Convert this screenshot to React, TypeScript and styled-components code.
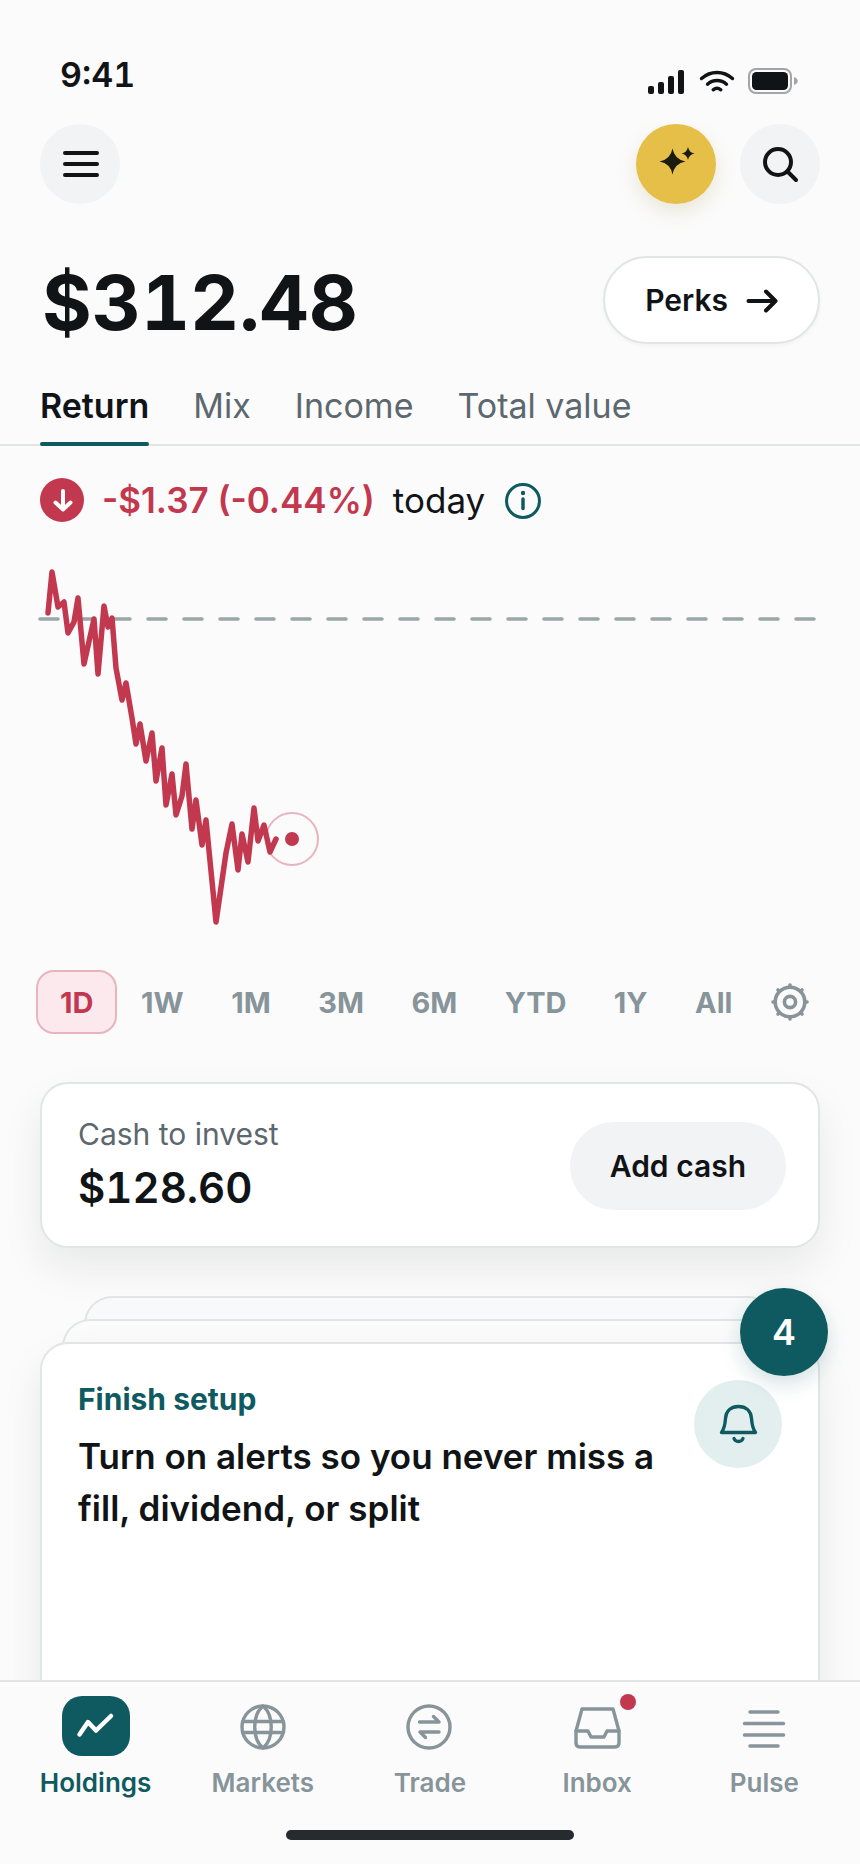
import React, { useState } from "react";
import styled, { createGlobalStyle, css } from "styled-components";

const color = {
  page: "#fbfbfb",
  ink: "#111416",
  muted: "#5c686e",
  faint: "#87949a",
  line: "#e0e5e5",
  fill: "#f1f3f5",
  teal: "#0f5a60",
  red: "#c2384f",
  gold: "#e6bf48",
};

const GlobalStyle = createGlobalStyle`
  *, *::before, *::after { box-sizing: border-box; }
  body {
    margin: 0;
    background: ${color.page};
    color: ${color.ink};
    font-family: Inter, "Liberation Sans", sans-serif;
    -webkit-font-smoothing: antialiased;
  }
  button {
    margin: 0;
    padding: 0;
    border: 0;
    background: none;
    color: inherit;
    font: inherit;
    cursor: pointer;
  }
  svg { display: block; flex: none; }
  h1, h2, p { margin: 0; }
`;

const Screen = styled.div`
  height: 100vh;
  display: flex;
  flex-direction: column;
`;

const StatusBar = styled.div`
  display: flex;
  justify-content: space-between;
  align-items: flex-end;
  padding: 50px 62px 24px 60px;
`;

const Clock = styled.time`
  font-size: 34px;
  line-height: 50px;
  font-weight: 600;
  font-variant-numeric: tabular-nums;
`;

const Content = styled.main`
  flex: 1;
  min-height: 0;
  overflow: hidden auto;
  scrollbar-width: none;
`;

const Row = styled.div`
  display: flex;
  align-items: center;
  justify-content: space-between;
  padding: 0 40px;
`;

const Actions = styled.div`
  display: flex;
  gap: 24px;
`;

const RoundButton = styled.button<{ $accent?: boolean }>`
  width: 80px;
  height: 80px;
  border-radius: 50%;
  display: grid;
  place-items: center;
  background: ${color.fill};
  ${(p) =>
    p.$accent &&
    css`
      background: ${color.gold};
      box-shadow: 0 8px 20px rgba(150, 120, 30, 0.16);
    `}
`;

const BalanceRow = styled(Row)`
  align-items: flex-start;
  margin-top: 52px;
  padding-left: 42px;
`;

const Balance = styled.h1`
  font-size: 76px;
  line-height: 92px;
  font-weight: 700;
  font-variant-numeric: tabular-nums;
`;

const PillButton = styled.button<{ $outlined?: boolean }>`
  display: flex;
  align-items: center;
  gap: 18px;
  height: 88px;
  padding: 0 40px;
  border-radius: 44px;
  background: ${color.fill};
  font-size: 30px;
  font-weight: 600;
  ${(p) =>
    p.$outlined &&
    css`
      background: #fff;
      border: 2px solid ${color.line};
      box-shadow: 0 2px 4px rgba(16, 24, 28, 0.04);
    `}
`;

const Tabs = styled.div`
  display: flex;
  gap: 44px;
  margin-top: 36px;
  padding: 0 40px;
  box-shadow: inset 0 -2px ${color.line};
`;

const Tab = styled.button<{ $active: boolean }>`
  position: relative;
  padding-bottom: 18px;
  font-size: 34px;
  line-height: 44px;
  font-weight: ${(p) => (p.$active ? 600 : 400)};
  color: ${(p) => (p.$active ? color.ink : color.muted)};
  &::after {
    content: "";
    position: absolute;
    left: 0;
    right: 0;
    bottom: 0;
    height: 4px;
    border-radius: 2px;
    background: ${(p) => (p.$active ? color.teal : "transparent")};
  }
`;

const ChangeRow = styled.div`
  display: flex;
  align-items: center;
  gap: 18px;
  margin-top: 32px;
  padding: 0 40px;
  font-size: 35px;
  line-height: 44px;
`;

const Loss = styled.span`
  color: ${color.red};
  font-weight: 600;
`;

const Chart = styled.svg`
  width: calc(100% - 76px);
  height: auto;
  margin: 28px 38px 0;
`;

const Ranges = styled.div`
  display: flex;
  justify-content: space-between;
  margin: 20px 36px 0;
`;

const RangeButton = styled.button<{ $active?: boolean }>`
  display: grid;
  place-items: center;
  min-width: 68px;
  height: 64px;
  padding: 0 22px;
  border: 2px solid transparent;
  border-radius: 18px;
  font-size: 29px;
  font-weight: 700;
  color: ${color.faint};
  ${(p) =>
    p.$active &&
    css`
      color: ${color.red};
      background: #fbe9ed;
      border-color: #e8b4c0;
    `}
`;

const SettingsButton = styled(RangeButton)`
  padding: 0;
`;

const surface = css`
  background: #fff;
  border: 2px solid ${color.line};
  border-radius: 28px;
  box-shadow: 0 20px 40px rgba(16, 24, 28, 0.08);
`;

const CashCard = styled.section`
  ${surface}
  display: flex;
  align-items: center;
  justify-content: space-between;
  margin: 48px 40px 0;
  padding: 26px 32px 24px 36px;
  min-height: 166px;
`;

const CashLabel = styled.p`
  font-size: 30px;
  line-height: 44px;
  color: ${color.muted};
`;

const CashValue = styled.p`
  font-size: 42px;
  line-height: 64px;
  font-weight: 600;
  font-variant-numeric: tabular-nums;
`;

const Stack = styled.section`
  position: relative;
  margin: 48px 40px 0;
`;

const StackLayer = styled.div<{ $depth: number }>`
  height: 51px;
  margin: 0 ${(p) => p.$depth * 22}px -28px;
  border: 2px solid ${color.line};
  border-bottom: 0;
  border-radius: 28px 28px 0 0;
  background: ${(p) => (p.$depth > 1 ? "#f7f9fa" : "#fbfbfb")};
`;

const SetupCard = styled.article`
  ${surface}
  display: flex;
  justify-content: space-between;
  min-height: 400px;
  padding: 36px;
`;

const SetupText = styled.div`
  max-width: 600px;
`;

const Eyebrow = styled.p`
  font-size: 30px;
  line-height: 38px;
  font-weight: 700;
  color: ${color.teal};
`;

const SetupTitle = styled.h2`
  margin-top: 12px;
  font-size: 35px;
  line-height: 52px;
  font-weight: 600;
`;

const BellDisc = styled.div`
  flex: none;
  display: grid;
  place-items: center;
  width: 88px;
  height: 88px;
  border-radius: 50%;
  background: #e3efef;
`;

const CountBadge = styled.span`
  position: absolute;
  top: -8px;
  right: -8px;
  display: grid;
  place-items: center;
  width: 88px;
  height: 88px;
  border-radius: 50%;
  background: ${color.teal};
  color: #fff;
  font-size: 36px;
  font-weight: 600;
  box-shadow: 0 8px 20px rgba(15, 90, 96, 0.18);
`;

const NavArea = styled.footer`
  border-top: 2px solid ${color.line};
  background: ${color.page};
`;

const Nav = styled.nav`
  display: grid;
  grid-template-columns: repeat(5, 1fr);
  padding: 14px 12px 0;
`;

const NavButton = styled.button<{ $active?: boolean }>`
  display: flex;
  flex-direction: column;
  align-items: center;
  gap: 10px;
  font-size: 26px;
  line-height: 34px;
  font-weight: 600;
  color: ${(p) => (p.$active ? color.teal : color.faint)};
`;

const NavIcon = styled.span<{ $active?: boolean }>`
  position: relative;
  display: grid;
  place-items: center;
  width: 68px;
  height: 60px;
  border-radius: 20px;
  ${(p) => p.$active && `background: ${color.teal}; color: #fff;`}
`;

const UnreadDot = styled.span`
  position: absolute;
  top: -2px;
  right: -5px;
  width: 16px;
  height: 16px;
  border-radius: 50%;
  background: ${color.red};
`;

const HomeIndicator = styled.div`
  width: 288px;
  height: 10px;
  margin: 30px auto 24px;
  border-radius: 5px;
  background: #262b2f;
`;

const stroke = {
  fill: "none",
  stroke: "currentColor",
  strokeLinecap: "round",
  strokeLinejoin: "round",
} as const;

const StatusIcons = () => (
  <svg width="150" height="32" viewBox="0 0 150 32" aria-hidden="true">
    <g fill={color.ink}>
      <rect x="0" y="18" width="6" height="8" rx="2" />
      <rect x="10" y="14" width="6" height="12" rx="2" />
      <rect x="20" y="8" width="6" height="18" rx="2" />
      <rect x="30" y="2" width="6" height="24" rx="2" />
      <rect x="104" y="4" width="36" height="18" rx="4.5" />
    </g>
    <g {...stroke} stroke={color.ink} strokeWidth="3.4">
      <path d="M53.5 10.5C62.500 2.500 75.500 2.500 84.500 10.500" />
      <path d="M59.500 16.200C65 11.200 73 11.200 78.500 16.200" />
      <path d="M65.200 21.800C67.500 20 70.500 20 72.800 21.800" />
    </g>
    <rect x="101" y="1" width="42" height="24" rx="7" fill="none" stroke="#a2a6a8" strokeWidth="2" />
    <path d="M146 9c5 1.500 5 6.500 0 8z" fill="#a2a6a8" />
  </svg>
);

const MenuIcon = () => (
  <svg width="40" height="40" viewBox="0 0 40 40" aria-hidden="true">
    <path {...stroke} strokeWidth="4" d="M5 9h32M5 20h32M5 31h32" />
  </svg>
);

const SparkleIcon = () => (
  <svg width="44" height="44" viewBox="0 0 44 44" fill="#1b1c0e" aria-hidden="true">
    <path d="M18.500 6.500Q20.500 17.500 31.500 19.500Q20.500 21.500 18.500 32.500Q16.500 21.500 5.500 19.500Q16.500 17.500 18.500 6.500Z" />
    <path d="M34 5Q35 10.500 40.500 11.500Q35 12.500 34 18Q33 12.500 27.500 11.500Q33 10.500 34 5Z" />
  </svg>
);

const SearchIcon = () => (
  <svg width="44" height="44" viewBox="0 0 44 44" aria-hidden="true">
    <circle {...stroke} strokeWidth="4" cx="20" cy="20" r="13" />
    <path {...stroke} strokeWidth="4" d="M29.500 29.500L38 38" />
  </svg>
);

const ArrowIcon = () => (
  <svg width="32" height="28" viewBox="0 0 32 28" aria-hidden="true">
    <path {...stroke} strokeWidth="4" d="M2.500 15h27M20 5.500L29.500 15L20 24.500" />
  </svg>
);

const DownIcon = () => (
  <svg width="44" height="44" viewBox="0 0 44 44" aria-hidden="true">
    <circle cx="22" cy="22" r="22" fill={color.red} />
    <path {...stroke} stroke="#fff" strokeWidth="4" d="M23 13v18M15.500 24.500L23 31.500L30.500 24.500" />
  </svg>
);

const InfoIcon = () => (
  <svg width="40" height="40" viewBox="0 0 40 40" aria-hidden="true">
    <circle {...stroke} stroke={color.teal} strokeWidth="3" cx="20" cy="21" r="16.500" />
    <path {...stroke} stroke={color.teal} strokeWidth="3.500" d="M20 19v9.500" />
    <circle cx="20" cy="13" r="2.200" fill={color.teal} />
  </svg>
);

const GearIcon = () => (
  <svg width="40" height="40" viewBox="0 0 40 40" aria-hidden="true">
    <g {...stroke} strokeWidth="3.600">
      <circle cx="20" cy="20" r="14.800" />
      <circle cx="20" cy="20" r="5.600" />
      {[0, 45, 90, 135, 180, 225, 270, 315].map((a) => (
        <path key={a} d="M20 4.500V3" transform={`rotate(${a} 20 20)`} />
      ))}
    </g>
  </svg>
);

const BellIcon = () => (
  <svg width="48" height="48" viewBox="0 0 48 48" aria-hidden="true">
    <g {...stroke} stroke={color.teal} strokeWidth="3.400">
      <path d="M7.500 32.500C10.500 28.500 11 25.500 11.500 18.500C12 10.500 17.500 6.500 24.500 6.500S37 10.500 37.500 18.500C38 25.500 38.500 28.500 41.500 32.500Z" />
      <path d="M20 38.500C21.500 42.500 27.500 42.500 29 38.500" />
    </g>
  </svg>
);

const HoldingsIcon = () => (
  <svg width="48" height="48" viewBox="0 0 48 48" aria-hidden="true">
    <path {...stroke} strokeWidth="4.500" d="M7.500 32.500L16 20L24 28.500L39 14" />
  </svg>
);

const MarketsIcon = () => (
  <svg width="48" height="48" viewBox="0 0 48 48" aria-hidden="true">
    <g {...stroke} strokeWidth="3.400">
      <circle cx="24" cy="25" r="21" />
      <path d="M4 19.500h40M4 30.500h40" />
      <path d="M24 4C13 13 13 37 24 46C35 37 35 13 24 4Z" />
    </g>
  </svg>
);

const TradeIcon = () => (
  <svg width="48" height="48" viewBox="0 0 48 48" aria-hidden="true">
    <g {...stroke} strokeWidth="3.400">
      <circle cx="23" cy="25" r="21" />
      <path d="M13.500 20h19.500L27.500 14.500" />
      <path d="M33 30H14L19.500 35.500" />
    </g>
  </svg>
);

const InboxIcon = () => (
  <svg width="48" height="48" viewBox="0 0 48 48" aria-hidden="true">
    <g {...stroke} strokeWidth="3.400">
      <path d="M9 7h31l6 22v12q0 4-4 4H7q-4 0-4-4V29Z" />
      <path d="M3 29H15L18 35H31L34 29H46" />
    </g>
  </svg>
);

const PulseIcon = () => (
  <svg width="48" height="48" viewBox="0 0 48 48" aria-hidden="true">
    <path {...stroke} strokeWidth="3.500" d="M10 10h28M4.500 21.500h39M4.500 33h39M10 44h28" />
  </svg>
);

const prices: [number, number][] = [
  [8, 63], [12, 22], [18, 57], [24, 52], [28, 83], [34, 72], [38, 48], [44, 114],
  [54, 69], [58, 124], [64, 56], [68, 77], [72, 68], [76, 118], [82, 150], [86, 133],
  [92, 168], [96, 194], [100, 174], [106, 211], [112, 183], [116, 231], [122, 198],
  [126, 255], [132, 224], [136, 265], [142, 246], [146, 214], [152, 279], [156, 250],
  [162, 295], [166, 270], [176, 372], [186, 303], [192, 274], [198, 320], [202, 284],
  [208, 312], [214, 258], [218, 291], [224, 275], [230, 302], [236, 289],
];

const tabs = ["Return", "Mix", "Income", "Total value"];
const ranges = ["1D", "1W", "1M", "3M", "6M", "YTD", "1Y", "All"];
const destinations = [
  { label: "Holdings", Icon: HoldingsIcon },
  { label: "Markets", Icon: MarketsIcon },
  { label: "Trade", Icon: TradeIcon },
  { label: "Inbox", Icon: InboxIcon, unread: true },
  { label: "Pulse", Icon: PulseIcon },
];

export default function App() {
  const [tab, setTab] = useState("Return");
  const [range, setRange] = useState("1D");
  const [page, setPage] = useState("Holdings");

  return (
    <Screen>
      <GlobalStyle />
      <StatusBar>
        <Clock>9:41</Clock>
        <StatusIcons />
      </StatusBar>

      <Content>
        <Row as="header">
          <RoundButton aria-label="Menu"><MenuIcon /></RoundButton>
          <Actions>
            <RoundButton $accent aria-label="Assistant"><SparkleIcon /></RoundButton>
            <RoundButton aria-label="Search"><SearchIcon /></RoundButton>
          </Actions>
        </Row>

        <BalanceRow>
          <Balance>$312.48</Balance>
          <PillButton $outlined>Perks<ArrowIcon /></PillButton>
        </BalanceRow>

        <Tabs role="tablist">
          {tabs.map((t) => (
            <Tab key={t} role="tab" aria-selected={t === tab} $active={t === tab} onClick={() => setTab(t)}>
              {t}
            </Tab>
          ))}
        </Tabs>

        <ChangeRow>
          <DownIcon />
          <Loss>-$1.37 (-0.44%)</Loss>
          <span>today</span>
          <button aria-label="About today's return"><InfoIcon /></button>
        </ChangeRow>

        <Chart viewBox="-2 0 784 400" role="img" aria-label="Return over one day">
          <path d="M0 69H780" fill="none" stroke="#9aa6a8" strokeWidth="3.500" strokeLinecap="round" strokeDasharray="18 18" />
          <circle cx="252" cy="289" r="26" fill="none" stroke="#e8b4c0" strokeWidth="2" />
          <polyline
            points={prices.map((p) => p.join(",")).join(" ")}
            fill="none"
            stroke={color.red}
            strokeWidth="5.500"
            strokeLinecap="round"
            strokeLinejoin="round"
          />
          <circle cx="252" cy="289" r="7" fill={color.red} />
        </Chart>

        <Ranges>
          {ranges.map((r) => (
            <RangeButton key={r} $active={r === range} aria-pressed={r === range} onClick={() => setRange(r)}>
              {r}
            </RangeButton>
          ))}
          <SettingsButton aria-label="Chart settings"><GearIcon /></SettingsButton>
        </Ranges>

        <CashCard>
          <div>
            <CashLabel>Cash to invest</CashLabel>
            <CashValue>$128.60</CashValue>
          </div>
          <PillButton>Add cash</PillButton>
        </CashCard>

        <Stack>
          <StackLayer $depth={2} />
          <StackLayer $depth={1} />
          <SetupCard>
            <SetupText>
              <Eyebrow>Finish setup</Eyebrow>
              <SetupTitle>Turn on alerts so you never miss a fill, dividend, or split</SetupTitle>
            </SetupText>
            <BellDisc><BellIcon /></BellDisc>
          </SetupCard>
          <CountBadge>4</CountBadge>
        </Stack>
      </Content>

      <NavArea>
        <Nav aria-label="Main">
          {destinations.map(({ label, Icon, unread }) => (
            <NavButton key={label} $active={label === page} onClick={() => setPage(label)}>
              <NavIcon $active={label === page}>
                <Icon />
                {unread && <UnreadDot />}
              </NavIcon>
              {label}
            </NavButton>
          ))}
        </Nav>
        <HomeIndicator />
      </NavArea>
    </Screen>
  );
}
